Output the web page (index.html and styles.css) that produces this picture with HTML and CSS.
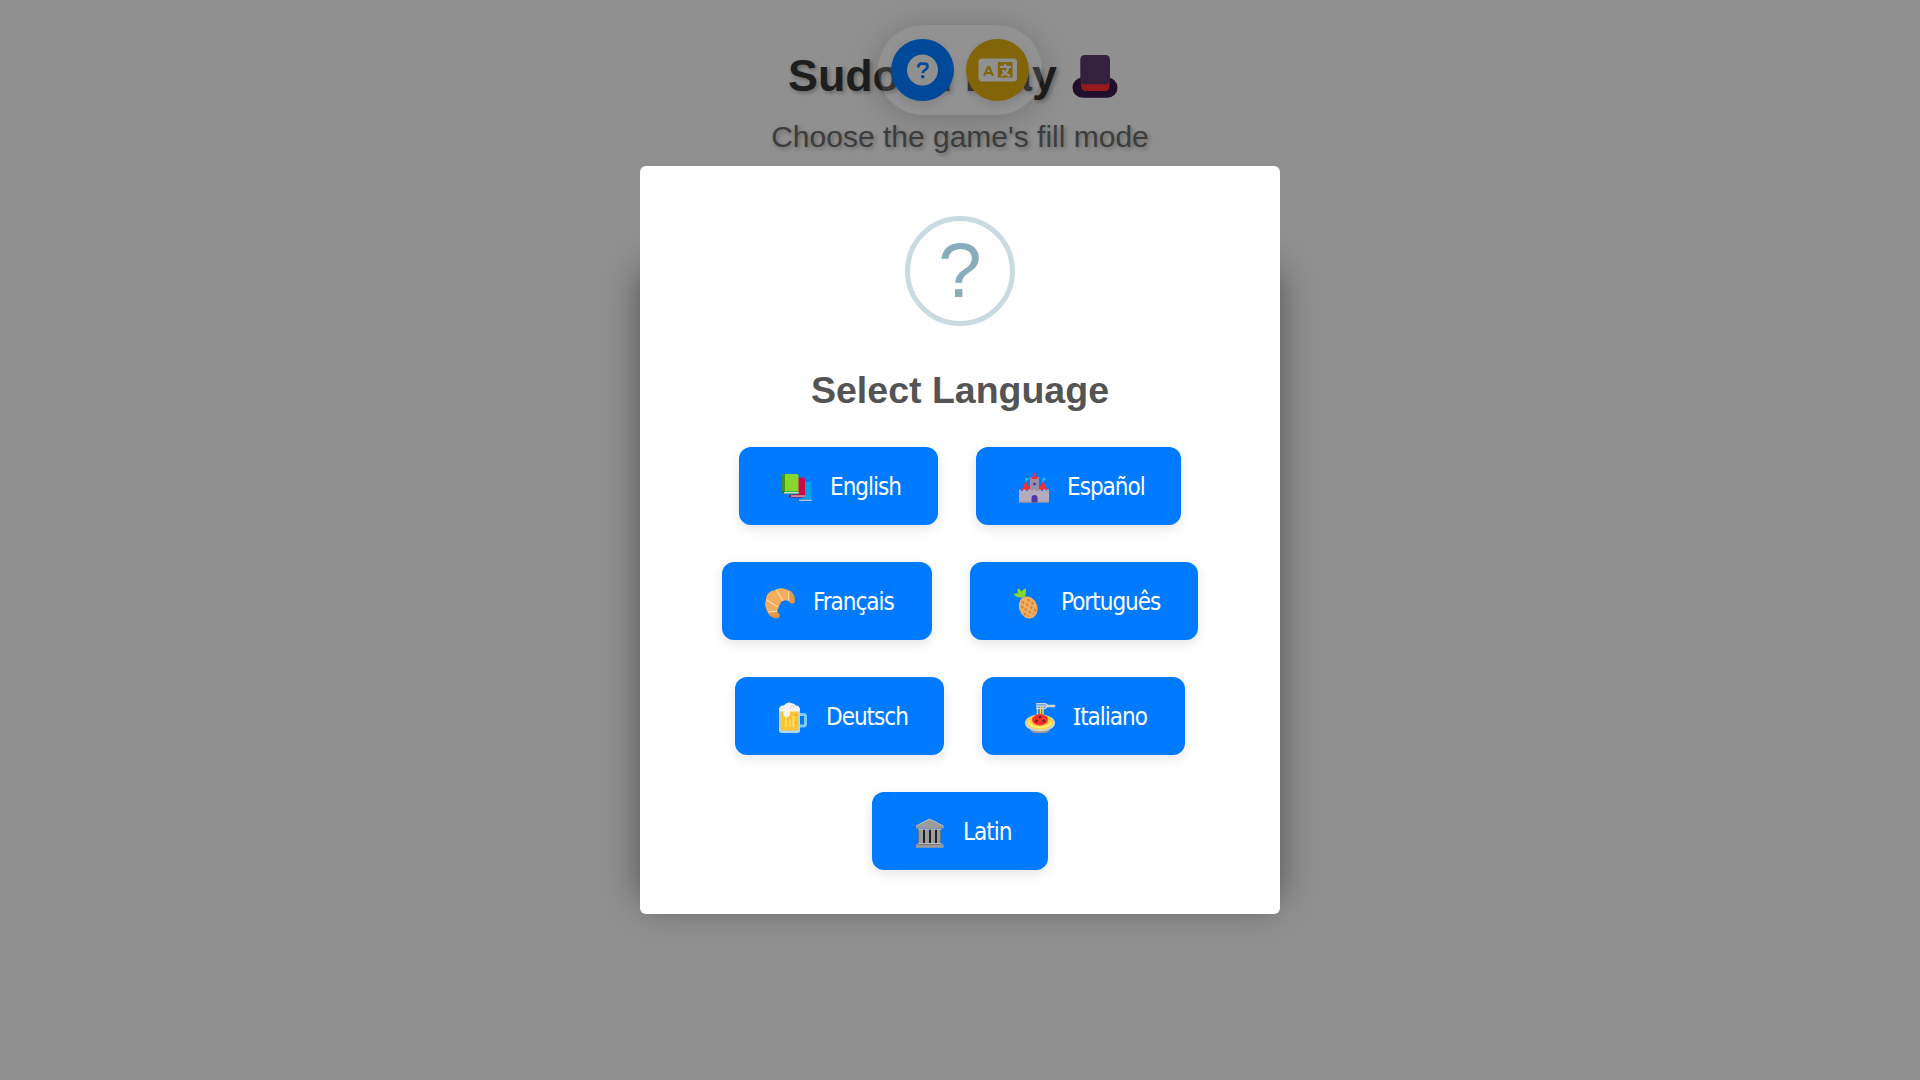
FILE: index.html
```html
<!DOCTYPE html>
<html lang="en">
<head>
<meta charset="UTF-8">
<title>Sudoku Play</title>
<link rel="stylesheet" href="styles.css">
</head>
<body>
<div class="page">
  <h1 class="title">Sudoku Play
    <svg class="hat" viewBox="0 0 32 32"><rect x="1" y="17" width="30" height="13.5" rx="6.7" fill="#37194a"/><path d="M6.800 14h18.900v9a3 3 0 0 1-3 3H9.800a3 3 0 0 1-3-3z" fill="#f92f2f"/><rect x="6.200" y="2" width="19.800" height="19.500" rx="3" fill="#553868"/></svg>
  </h1>
  <p class="subtitle">Choose the game's fill mode</p>
  <div class="card"></div>
</div>

<nav class="toolbar">
  <button class="tool tool-help" aria-label="Help">
    <svg viewBox="0 0 62 62"><circle cx="31" cy="31" r="15.500" fill="#f0f0f0"/><path d="M26.900 28.500v-.7c0-2.200 1.200-3.200 3.200-3.200h2.700c2 0 3.200 1.400 3.200 3.100 0 3.300-4.700 2.900-4.700 6.400" fill="none" stroke="#007bff" stroke-width="2.700"/><circle cx="31.200" cy="37.800" r="1.800" fill="#007bff"/></svg>
  </button>
  <button class="tool tool-language" aria-label="Language">
    <svg viewBox="0 0 62 62"><rect x="12" y="19.500" width="38.500" height="23" rx="3.500" fill="#f0f0f0"/><path d="M31.300 23h14.700v15.600H31.300z" fill="#daa90f"/><path d="M17.600 36.700l3.900-8.700h1l3.900 8.700M19 34h6" fill="none" stroke="#daa90f" stroke-width="2.200" stroke-linejoin="round"/><path d="M33.500 27.800h11M38.800 25v3M41.800 28.500c-.8 3.600-3.600 6.700-7.300 8.200M36.200 31c1.500 2.700 4 4.900 7.300 5.900" fill="none" stroke="#f0f0f0" stroke-width="2.300"/></svg>
  </button>
</nav>

<div class="overlay">
  <section class="modal" role="dialog" aria-labelledby="dialog-title">
    <div class="modal-icon">?</div>
    <h2 class="modal-title" id="dialog-title">Select Language</h2>
    <div class="languages">
      <div class="row">
        <button class="lang lang-en">
          <svg viewBox="0 0 32 32"><path d="M20 10h10v18H20z" fill="#00a6ed"/><path d="M16 27.200h15v2H17z" fill="#0074ba"/><path d="M18 27.700h13v1.200H18z" fill="#d3d3d3"/><path d="M15 5.500h7.500q1.500 0 1.500 1.500v18H12z" fill="#ca0b4a"/><path d="M8 22.700h16v2.800H10q-2 0-2-2z" fill="#990838"/><path d="M10 23.500h14v1.100H10z" fill="#e4e4e4"/><path d="M3 2h13q1.500 0 1.500 1.500V22H1V4q0-2 2-2z" fill="#86d72f"/><path d="M3 2h1v18H1V4q0-2 2-2z" fill="#44911b"/><path d="M1 19.500h16.500v2.800H3q-2 0-2-2z" fill="#008463"/><path d="M3 20.200h14.500v1.200H3z" fill="#f3f3e8"/></svg>
          <span>English</span>
        </button>
        <button class="lang lang-es">
          <svg viewBox="0 0 32 32"><path d="M12 6h9v14h-9z" fill="#998ea4"/><path d="M12 6v-1h1.500v1h1.500V5h3v1h1.500V5H21v3h-9z" fill="#998ea4"/><path d="M16.500.500L19.500 7h-6zM8 9l4.500 9h-9zM25 9l4.500 9h-9z" fill="#f92f2f"/><path d="M7.500 5.500l4 1.500-3 1.500V10h-1zM24.500 5.500l4 1.500-3 1.500V10h-1z" fill="#26c9fc"/><path d="M1 17.500h2v1.500h2v-1.500h3v1.500h2v-1.500h3v1.500h2v-1.500h3v1.500h2v-1.500h3v1.500h2v-1.500h3v1.500h1v-1.500h2v13H1z" fill="#b4acbc"/><path d="M1 29.500h30v1H1z" fill="#998ea4"/><path d="M13.500 30.500V26a3 3 0 0 1 6 0v4.500z" fill="#5235a8"/><circle cx="16.500" cy="12" r="1.500" fill="#5235a8"/></svg>
          <span>Español</span>
        </button>
      </div>
      <div class="row">
        <button class="lang lang-fr">
          <svg viewBox="0 0 32 32"><path d="M26 3.500c4 3 5.500 7 4.700 11.500-.8 2.500-4.500 2-6.200-.7L22 10zM3.500 24.500c1 4 5 7 9.500 6.700 3-.3 3.700-3 1.500-5l-4-3.500z" fill="#e39648"/><path d="M25 3.800l-.2 10c-3-.7-6-.5-7.500 1-1.300 2-2.500 5-4.500 10.400H4C1 21 .5 16 2 13c0-5 3-9 8-9.500 5-3.500 11-2.500 15 .3z" fill="#f3ad61"/><path d="M25 3.800l-.3 10M12.500 3l6.500 11M2 12.500L13.800 20M3.800 25l9.500-.5" fill="none" stroke="#ffefb0" stroke-width=".9"/></svg>
          <span>Français</span>
        </button>
        <button class="lang lang-pt">
          <svg viewBox="0 0 32 32"><g transform="rotate(-20 16 20)"><ellipse cx="16" cy="20.500" rx="9" ry="11.300" fill="#f3ad61"/><g fill="#d3883e"><path d="M13 12l1.500 2-1.500 2-1.500-2zM19 12l1.500 2-1.500 2-1.500-2zM16 15.500l1.500 2-1.500 2-1.500-2zM10.500 16l1.500 2-1.500 2L9 18zM21.500 16l1.500 2-1.500 2-1.500-2zM13 19.500l1.500 2-1.500 2-1.500-2zM19 19.500l1.500 2-1.500 2-1.500-2zM16 23.500l1.500 2-1.500 2-1.500-2zM10.500 23.500l1.500 2-1.500 2-1.500-2zM21.500 23.500l1.500 2-1.500 2-1.500-2zM13 27l1 1.300-1 1.300-1-1.300zM19 27l1 1.300-1 1.300-1-1.300z"/></g></g><path d="M11 10.500C7 11 3.500 10 1.500 7c2.200-1 3.600-1 5 0C5 5 5.500 3 6 1.500c2 .6 3 2 3.500 3.500 1-2.200 2.500-3.200 4.500-3.500.2 3 0 5.500-1 8z" fill="#86d72f"/></svg>
          <span>Português</span>
        </button>
      </div>
      <div class="row">
        <button class="lang lang-de">
          <svg viewBox="0 0 32 32"><path d="M22 12.500h4.500q2 0 2 2v7.500q0 2-2 2H22" fill="none" stroke="#83cbff" stroke-width="3"/><path d="M2 6h21v22.500q0 2.500-2.500 2.500h-16Q2 31 2 28.500z" fill="#a8dbff"/><path d="M3.500 7h18v21.500h-18z" fill="#fcc334"/><path d="M8 15h1.800v10H8zM12 17h1.800v8H12zM15.500 14h1.800v11h-1.800z" fill="#ffe05a"/><path d="M18 12h2v2h-2zM18 20h2v2h-2z" fill="#f9a12e"/><path d="M2 8c0-3 2-5 5-4.500C9 .500 13-.200 15 1.500c2-.3 3 .5 3.500 2C21 3 23 5 23 8q0 1.500-1.500 1.500H13V12c0 4-6.500 4-6.500 0V9.500h-3Q2 9.500 2 8z" fill="#f4f4f4"/><path d="M14 4l1 1M17 5l-1-1M13 7l1-1" stroke="#bebebe"/></svg>
          <span>Deutsch</span>
        </button>
        <button class="lang lang-it">
          <svg viewBox="0 0 32 32"><path d="M6 27h20q-1 4-6 4h-8q-5 0-6-4z" fill="#9b9b9b"/><ellipse cx="16" cy="21" rx="15" ry="8.500" fill="#d3d3d3"/><ellipse cx="16" cy="20" rx="13" ry="7.500" fill="#fcd53f"/><path d="M5 20q1 5 11 5.500Q26 25 27 20" fill="none" stroke="#fff17a" stroke-width="1.500"/><path d="M13.500 4v10M16.500 4v10M19 4v10" stroke="#fcd53f" stroke-width="1.500"/><ellipse cx="16" cy="17.800" rx="8" ry="5.700" fill="#f92f2f"/><g fill="#6d2b22"><circle cx="16" cy="15" r="1.600"/><circle cx="12.500" cy="19" r="1.600"/><circle cx="19.700" cy="19" r="1.600"/></g><path d="M12 1.700h9.500l2.500 2M12 4h11M12 6.500h9l3-2.500" fill="none" stroke="#d3d3d3" stroke-width="1.500"/><path d="M23 4h8.200" stroke="#d3d3d3" stroke-width="2.500"/></svg>
          <span><span class="serif-cap">I</span>taliano</span>
        </button>
      </div>
      <div class="row">
        <button class="lang lang-la">
          <svg viewBox="0 0 32 32"><path d="M4.500 12h22v16h-22z" fill="#212121"/><path d="M4.500 12h4.500v15H4.500zM11 12h4v15h-4zM17 12h4v15h-4zM23 12h3.500v15H23z" fill="#9b9b9b"/><path d="M15.500 2L2 9v2.500h27.500V9z" fill="#9b9b9b"/><path d="M2 9l13.500-7L29.500 9M4 12.200h23.500M4 26.500h23.500" fill="none" stroke="#bebebe"/><path d="M2 27.300h27.500v3.500H2z" fill="#9b9b9b"/></svg>
          <span>Latin</span>
        </button>
      </div>
    </div>
  </section>
</div>
</body>
</html>
```
FILE: styles.css
```css
* {
  box-sizing: border-box;
}

body {
  margin: 0;
  height: 1080px;
  overflow: hidden;
  background: #f0f0f0;
  font-family: "Liberation Sans", Arial, sans-serif;
}

.page {
  display: flex;
  flex-direction: column;
  align-items: center;
  padding-top: 49px;
}

.title {
  display: flex;
  align-items: center;
  width: 344px;
  height: 52px;
  margin: 0;
  color: #333;
  font-size: 44.8px;
  line-height: 52px;
  white-space: nowrap;
  text-shadow: 2px 2px 4px rgba(0, 0, 0, 0.3);
}

.hat {
  flex: none;
  width: 48px;
  height: 48px;
  margin-left: 14px;
  margin-top: 2px;
}

.subtitle {
  margin: 18px 0 0;
  color: #666;
  font-size: 30px;
  line-height: 35px;
  text-shadow: 2px 2px 4px rgba(0, 0, 0, 0.3);
}

.card {
  width: 640px;
  height: 640px;
  margin-top: 101px;
  border-radius: 25px;
  background: #fff;
  box-shadow: 0 10px 35px rgba(0, 0, 0, 0.45);
}

.toolbar {
  position: absolute;
  top: 25px;
  left: 878px;
  display: flex;
  align-items: center;
  justify-content: center;
  gap: 12px;
  width: 164px;
  height: 90px;
  border-radius: 45px;
  background: rgba(255, 255, 255, 0.2);
  box-shadow: 0 4px 30px rgba(0, 0, 0, 0.2);
}

.tool {
  width: 63px;
  height: 62px;
  padding: 0;
  border: 0;
  border-radius: 50%;
  box-shadow: 0 4px 8px rgba(0, 0, 0, 0.1);
}

.tool svg {
  display: block;
  width: 63px;
  height: 62px;
}

.tool-help {
  background: #007bff;
}

.tool-language {
  background: #daa90f;
}

.overlay {
  position: absolute;
  inset: 0;
  display: flex;
  align-items: center;
  justify-content: center;
  background: rgba(0, 0, 0, 0.4);
}

.modal {
  display: flex;
  flex-direction: column;
  align-items: center;
  width: 640px;
  height: 748px;
  padding-top: 50px;
  border-radius: 6px;
  background: #fff;
}

.modal-icon {
  width: 110px;
  height: 110px;
  border: 5px solid #c9dae1;
  border-radius: 50%;
  color: #87adbd;
  font-size: 78px;
  line-height: 98px;
  text-align: center;
}

.modal-title {
  margin: 42px 0 0;
  color: #545454;
  font-size: 37.5px;
  line-height: 44px;
}

.languages {
  display: flex;
  flex-direction: column;
  gap: 37px;
  margin-top: 35px;
}

.row {
  display: flex;
  justify-content: center;
  gap: 38px;
}

.lang {
  display: flex;
  align-items: center;
  gap: 17px;
  height: 78px;
  padding: 0 0 0 42px;
  border: 0;
  border-radius: 12px;
  background: #007bff;
  box-shadow: 0 4px 12px rgba(0, 0, 0, 0.1);
  color: #fff;
  font-family: "DejaVu Sans Condensed", "DejaVu Sans", sans-serif;
  font-stretch: condensed;
  font-size: 24px;
  line-height: 30px;
  letter-spacing: -1px;
  white-space: nowrap;
}

.lang > span {
  padding-top: 2px;
}

.lang svg {
  flex: none;
  width: 32px;
  height: 32px;
  margin-top: 3px;
}

.serif-cap {
  font-family: "Noto Sans", sans-serif;
  line-height: 1;
}

.lang-en { width: 199px; }
.lang-es { width: 205px; }
.lang-fr { width: 210px; }
.lang-pt { width: 228px; }
.lang-de { width: 209px; }
.lang-it { width: 203px; }
.lang-la { width: 176px; }
```
